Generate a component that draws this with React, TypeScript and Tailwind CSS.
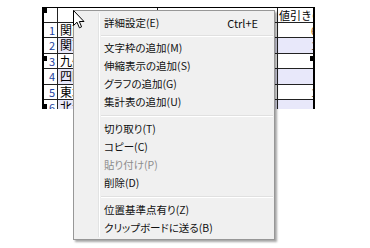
import { FC } from 'react';

type MenuEntry =
    | { kind: 'item'; label: string; shortcut?: string; disabled?: boolean }
    | { kind: 'sep'; h: string };

const entries: MenuEntry[] = [
    { kind: 'item', label: '詳細設定(E)', shortcut: 'Ctrl+E' },
    { kind: 'sep', h: 'h-[7px]' },
    { kind: 'item', label: '文字枠の追加(M)' },
    { kind: 'item', label: '伸縮表示の追加(S)' },
    { kind: 'item', label: 'グラフの追加(G)' },
    { kind: 'item', label: '集計表の追加(U)' },
    { kind: 'sep', h: 'h-[9px]' },
    { kind: 'item', label: '切り取り(T)' },
    { kind: 'item', label: 'コピー(C)' },
    { kind: 'item', label: '貼り付け(P)', disabled: true },
    { kind: 'item', label: '削除(D)' },
    { kind: 'sep', h: 'h-[9px]' },
    { kind: 'item', label: '位置基準点有り(Z)' },
    { kind: 'item', label: 'クリップボードに送る(B)' },
];

const rows = [
    { no: '1', name: '関西', value: '6', valueColor: 'text-[#b06a10]', h: 'h-[15px]' },
    { no: '2', name: '関東', value: '1', valueColor: 'text-[#333]', h: 'h-[16px]' },
    { no: '3', name: '九州', value: '', valueColor: '', h: 'h-[15px]' },
    { no: '4', name: '四国', value: '', valueColor: '', h: 'h-[16px]' },
    { no: '5', name: '東北', value: '1', valueColor: 'text-[#333]', h: 'h-[15px]' },
    { no: '6', name: '北海道', value: '', valueColor: '', h: 'h-[16px]' },
];

const Handle: FC<{ className: string }> = ({ className }) => (
    <div className={`absolute h-[5px] w-[5px] bg-black ${className}`} />
);

const SheetTable: FC = () => (
    <div className="absolute left-[42px] top-[7px] h-[102px] w-[273px] overflow-hidden border-l-2 border-r-2 border-t border-black bg-white">
        <div className="flex h-[15px] border-b border-[#222]">
            <div className="w-[14px] shrink-0 border-r border-[#222]" />
            <div className="w-[100px] shrink-0 border-r border-[#222]" />
            <div className="w-[120px] shrink-0 border-r border-[#222]" />
            <div className="flex-1 overflow-hidden whitespace-nowrap pl-[1px] text-[11px] leading-[14px]">
                値引きの
            </div>
        </div>
        {rows.map((row, i) => {
            const bg = i % 2 === 1 ? 'bg-[#e8e8fa]' : 'bg-white';
            return (
                <div key={row.no} className={`flex ${row.h} border-b border-[#222]`}>
                    <div className="w-[14px] shrink-0 border-r border-[#222] pr-[2px] text-right text-[11px] leading-[14px] text-[#1c3fa0]">
                        {row.no}
                    </div>
                    <div className={`w-[100px] shrink-0 border-r border-[#222] pl-[2px] text-[12px] leading-[14px] ${bg}`}>
                        {row.name}
                    </div>
                    <div className={`w-[120px] shrink-0 border-r border-[#222] ${bg}`} />
                    <div className={`flex-1 overflow-hidden whitespace-nowrap text-right text-[11px] leading-[14px] ${bg} ${row.valueColor}`}>
                        {row.value && <span className="mr-[-4px]">{row.value}</span>}
                    </div>
                </div>
            );
        })}
    </div>
);

const ContextMenu: FC = () => (
    <div className="absolute left-[73px] top-[10px] w-[202px] border border-[#979797] bg-[#f0f0f0] pb-[2px] pt-[3px] shadow-[2px_2px_2px_rgba(0,0,0,0.35)] [font-feature-settings:'palt']">
        <div className="absolute bottom-[2px] left-[24px] top-[2px] w-[2px] border-l border-r border-l-[#e2e3e3] border-r-white" />
        {entries.map((e, i) =>
            e.kind === 'sep' ? (
                <div key={i} className={`${e.h} flex flex-col justify-center pl-[27px] pr-[1px]`}>
                    <div className="h-[1px] bg-[#e0e0e0]" />
                    <div className="h-[1px] bg-white" />
                </div>
            ) : (
                <div
                    key={i}
                    className={`flex h-[18px] items-center whitespace-nowrap pl-[30px] pr-[16px] text-[10.5px] ${
                        e.disabled ? 'text-[#8d8d8d]' : 'text-[#111]'
                    }`}>
                    <span>{e.label}</span>
                    {e.shortcut && <span className="ml-auto text-[11px]">{e.shortcut}</span>}
                </div>
            ),
        )}
    </div>
);

const Cursor: FC = () => (
    <svg className="absolute left-[73px] top-[10px]" width="13" height="20" viewBox="0 0 13 20">
        <path
            d="M0.5 0.5 L0.5 15.5 L4 12.2 L6.4 17.8 L8.6 16.8 L6.3 11.5 L11 11.5 Z"
            fill="white"
            stroke="black"
            strokeWidth="1"
            strokeLinejoin="miter"
        />
    </svg>
);

export default function App() {
    return (
        <div
            className="relative h-[248px] w-[370px] overflow-hidden bg-white"
            style={{ fontFamily: '"Noto Sans CJK JP", "Liberation Sans", sans-serif' }}>
            <SheetTable />
            <Handle className="left-[42px] top-[8px]" />
            <Handle className="left-[42px] top-[56px]" />
            <Handle className="left-[310px] top-[56px]" />
            <Handle className="left-[42px] top-[104px]" />
            <ContextMenu />
            <Cursor />
        </div>
    );
}
